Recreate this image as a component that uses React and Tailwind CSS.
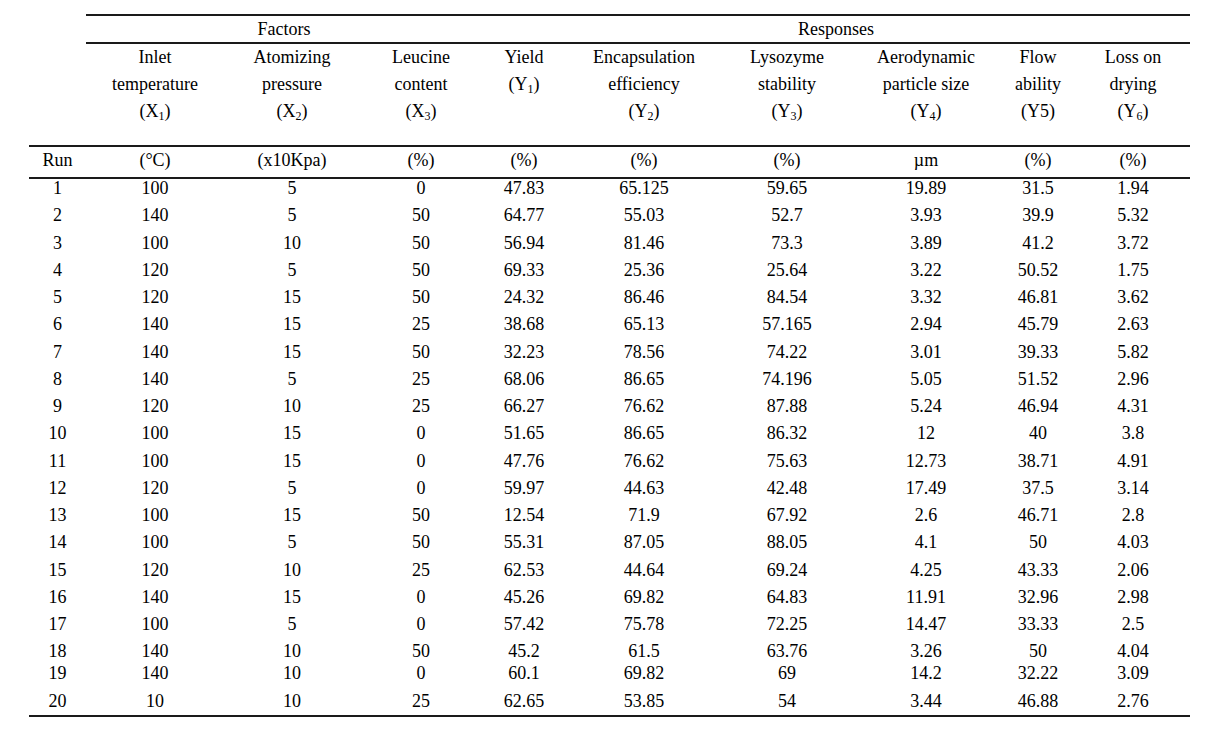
import React from "react";

const COLS = "grid grid-cols-[57px_138px_136px_122px_84px_156px_130px_148px_76px_114px]";

const headers = [
  [],
  ["Inlet", "temperature", ["X", "1"]],
  ["Atomizing", "pressure", ["X", "2"]],
  ["Leucine", "content", ["X", "3"]],
  ["Yield", ["Y", "1"]],
  ["Encapsulation", "efficiency", ["Y", "2"]],
  ["Lysozyme", "stability", ["Y", "3"]],
  ["Aerodynamic", "particle size", ["Y", "4"]],
  ["Flow", "ability", "(Y5)"],
  ["Loss on", "drying", ["Y", "6"]],
];

const units = ["Run", "(°C)", "(x10Kpa)", "(%)", "(%)", "(%)", "(%)", "µm", "(%)", "(%)"];

const data = [
  ["1", "100", "5", "0", "47.83", "65.125", "59.65", "19.89", "31.5", "1.94"],
  ["2", "140", "5", "50", "64.77", "55.03", "52.7", "3.93", "39.9", "5.32"],
  ["3", "100", "10", "50", "56.94", "81.46", "73.3", "3.89", "41.2", "3.72"],
  ["4", "120", "5", "50", "69.33", "25.36", "25.64", "3.22", "50.52", "1.75"],
  ["5", "120", "15", "50", "24.32", "86.46", "84.54", "3.32", "46.81", "3.62"],
  ["6", "140", "15", "25", "38.68", "65.13", "57.165", "2.94", "45.79", "2.63"],
  ["7", "140", "15", "50", "32.23", "78.56", "74.22", "3.01", "39.33", "5.82"],
  ["8", "140", "5", "25", "68.06", "86.65", "74.196", "5.05", "51.52", "2.96"],
  ["9", "120", "10", "25", "66.27", "76.62", "87.88", "5.24", "46.94", "4.31"],
  ["10", "100", "15", "0", "51.65", "86.65", "86.32", "12", "40", "3.8"],
  ["11", "100", "15", "0", "47.76", "76.62", "75.63", "12.73", "38.71", "4.91"],
  ["12", "120", "5", "0", "59.97", "44.63", "42.48", "17.49", "37.5", "3.14"],
  ["13", "100", "15", "50", "12.54", "71.9", "67.92", "2.6", "46.71", "2.8"],
  ["14", "100", "5", "50", "55.31", "87.05", "88.05", "4.1", "50", "4.03"],
  ["15", "120", "10", "25", "62.53", "44.64", "69.24", "4.25", "43.33", "2.06"],
  ["16", "140", "15", "0", "45.26", "69.82", "64.83", "11.91", "32.96", "2.98"],
  ["17", "100", "5", "0", "57.42", "75.78", "72.25", "14.47", "33.33", "2.5"],
  ["18", "140", "10", "50", "45.2", "61.5", "63.76", "3.26", "50", "4.04"],
  ["19", "140", "10", "0", "60.1", "69.82", "69", "14.2", "32.22", "3.09"],
  ["20", "10", "10", "25", "62.65", "53.85", "54", "3.44", "46.88", "2.76"],
];

function rowHeight(i) {
  if (i < 17) return "h-[27.25px]";
  if (i === 17) return "h-[21.75px]";
  if (i === 18) return "h-[28px]";
  return "h-[23px]";
}

function HeaderLine({ line }) {
  if (Array.isArray(line)) {
    return (
      <div>
        ({line[0]}
        <sub className="text-[12px]">{line[1]}</sub>)
      </div>
    );
  }
  return <div>{line}</div>;
}

export default function App() {
  return (
    <div className="min-h-[730px] w-[1212px] bg-white text-black font-[family-name:'Liberation_Serif','Times_New_Roman',serif] text-[18px]">
      <div className="pl-[29px] pt-[14px] w-[1190px]">
        {/* Group header */}
        <div className="flex">
          <div className="w-[57px]" />
          <div className="flex border-t-2 border-b-2 border-[#1a1a1a]">
            <div className="w-[396px] h-[26px] leading-[26px] text-center">Factors</div>
            <div className="w-[708px] h-[26px] leading-[26px] text-center">Responses</div>
          </div>
        </div>
        {/* Column headers */}
        <div className={`${COLS} h-[101px] leading-[27px] text-center`}>
          {headers.map((h, i) => (
            <div key={i}>
              {h.map((line, j) => (
                <HeaderLine key={j} line={line} />
              ))}
            </div>
          ))}
        </div>
        {/* Units row */}
        <div className={`${COLS} h-[34px] border-t-2 border-b-2 border-[#1a1a1a] leading-[27px] text-center`}>
          {units.map((u, i) => (
            <div key={i}>{u}</div>
          ))}
        </div>
        {/* Data rows */}
        <div className="border-b-2 border-[#1a1a1a]">
          {data.map((row, i) => (
            <div key={i} className={`${COLS} ${rowHeight(i)} leading-[18px] text-center`}>
              {row.map((c, j) => (
                <div key={j}>{c}</div>
              ))}
            </div>
          ))}
        </div>
      </div>
    </div>
  );
}
